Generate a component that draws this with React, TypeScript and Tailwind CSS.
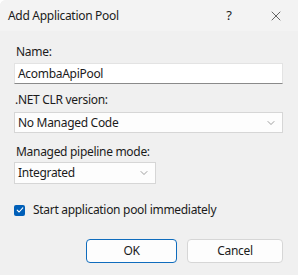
import { ChevronDown, X } from 'lucide-react';

export default function App() {
  return (
    <div className="w-[298px] h-[275px] bg-[#f0f0f0] text-[#1b1b1b] text-[12px] tracking-[-0.3px] font-['Noto_Sans',sans-serif] overflow-hidden rounded-tl-[6px] flex flex-col">
      <div className="h-[31px] bg-[#f3f3f3] flex items-center pl-[8px] pr-[14px]">
        <span className="flex-1 leading-none">Add Application Pool</span>
        <span className="w-[12px] text-center mr-[33px] text-[13px] leading-none">?</span>
        <X className="w-[16px] h-[16px] text-[#1b1b1b]" strokeWidth={1} />
      </div>

      <div className="flex flex-col pl-[14px] pr-[15px] pt-[13px]">
        <label className="h-[16px] leading-[16px] pl-[2px]">Name:</label>
        <div className="mt-[3px] h-[21px] bg-white border border-[#e3e3e3] border-b-[#8a8a8a] flex items-center pl-[3px]">
          AcombaApiPool
        </div>

        <label className="mt-[8px] h-[16px] leading-[16px] pl-[1px]">.NET CLR version:</label>
        <div className="mt-[4px] h-[21px] bg-[#fdfdfd] border border-[#d6d6d6] flex items-center justify-between pl-[3px] pr-[5px]">
          <span>No Managed Code</span>
          <ChevronDown className="w-[12px] h-[12px] text-[#606060]" strokeWidth={1.2} />
        </div>

        <label className="mt-[11px] h-[16px] leading-[16px] pl-[2px]">Managed pipeline mode:</label>
        <div className="mt-[2px] w-[142px] h-[22px] bg-[#fdfdfd] border border-[#d6d6d6] flex items-center justify-between pl-[3px] pr-[5px]">
          <span>Integrated</span>
          <ChevronDown className="w-[12px] h-[12px] text-[#606060]" strokeWidth={1.2} />
        </div>

        <div className="mt-[18px] h-[16px] flex items-center">
          <div className="w-[11px] h-[11px] rounded-[2px] bg-[#005fb8] flex items-center justify-center">
            <svg width="8" height="8" viewBox="0 0 8 8" fill="none">
              <path d="M1.2 4.2 L3.1 6 L6.8 1.9" stroke="white" strokeWidth="1.1" strokeLinecap="round" strokeLinejoin="round" />
            </svg>
          </div>
          <span className="ml-[8px]">Start application pool immediately</span>
        </div>

        <div className="mt-[21px] flex justify-end gap-[10px]">
          <button className="w-[91px] h-[24px] rounded-[4px] bg-[#fdfdfd] border border-[#0f6cbd] text-[#1b1b1b]">
            OK
          </button>
          <button className="w-[96px] h-[24px] rounded-[4px] bg-[#fdfdfd] border border-[#d6d6d6] text-[#1b1b1b]">
            Cancel
          </button>
        </div>
      </div>
    </div>
  );
}
